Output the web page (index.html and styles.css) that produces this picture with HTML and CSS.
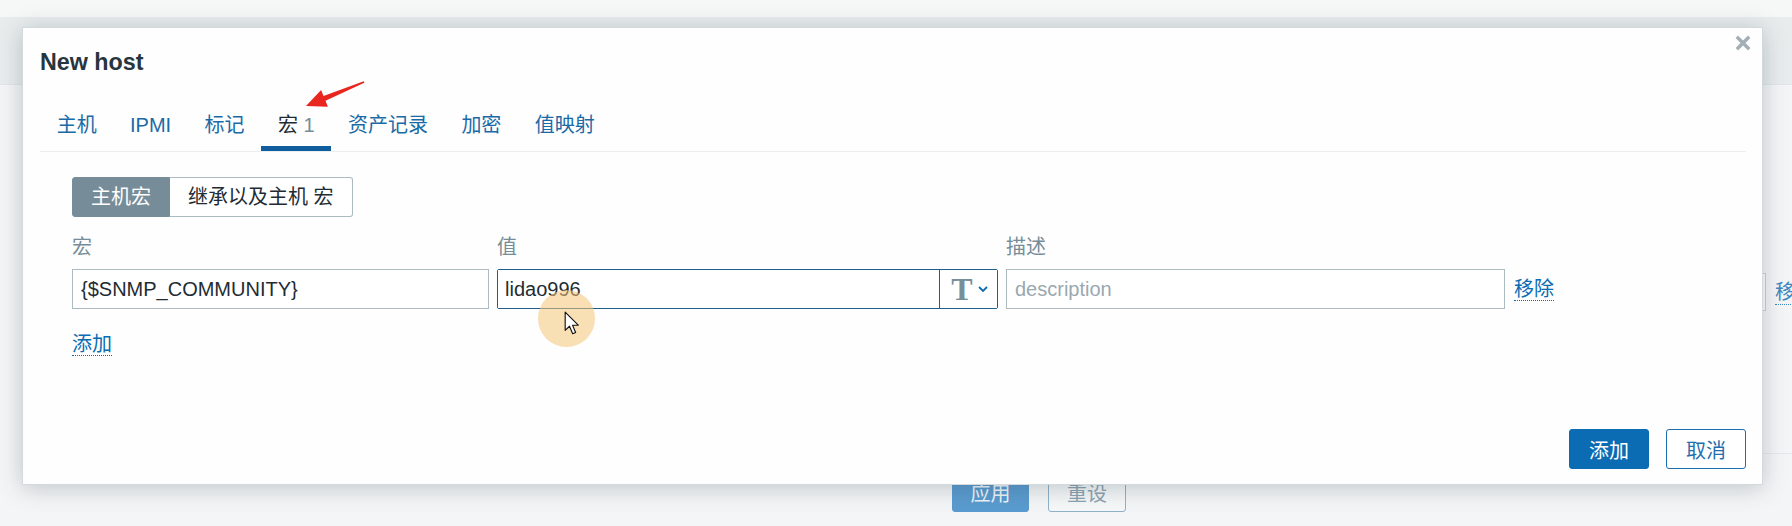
FILE: index.html
```html
<!DOCTYPE html>
<html lang="zh-CN">
<head>
<meta charset="utf-8">
<title>New host</title>
<link rel="stylesheet" href="styles.css">
</head>
<body>
<div class="page">
  <div class="page-top"></div>
  <div class="page-header"></div>
  <div class="page-main">
    <div class="bg-row">
      <span class="bg-input"></span>
      <a class="bg-link">移</a>
    </div>
    <div class="bg-sep"></div>
    <div class="bg-buttons">
      <button class="bg-btn bg-btn-primary">应用</button>
      <button class="bg-btn bg-btn-alt">重设</button>
    </div>
  </div>
</div>

<div class="dialog">
  <button class="dialog-close" title="Close">
    <svg viewBox="0 0 16 16" width="16" height="16"><path d="M3 3 L13 13 M13 3 L3 13" stroke="#a3aeb5" stroke-width="3.4" stroke-linecap="square" fill="none"/></svg>
  </button>
  <h4 class="dialog-title">New host</h4>
  <ul class="tabs">
    <li class="tab"><a>主机</a></li>
    <li class="tab"><a>IPMI</a></li>
    <li class="tab"><a>标记</a></li>
    <li class="tab active"><a>宏 <span class="tab-count">1</span></a></li>
    <li class="tab"><a>资产记录</a></li>
    <li class="tab"><a>加密</a></li>
    <li class="tab"><a>值映射</a></li>
  </ul>
  <div class="tab-content">
    <div class="radio-seg">
      <span class="seg active">主机宏</span>
      <span class="seg">继承以及主机 宏</span>
    </div>
    <div class="macro-grid">
      <div class="col-label">宏</div>
      <div class="col-label">值</div>
      <div class="col-label">描述</div>
      <div></div>
      <input class="field" type="text" value="{$SNMP_COMMUNITY}">
      <div class="value-group">
        <input class="field field-inner" type="text" value="lidao996">
        <button class="type-btn"><span class="type-t">T</span><svg viewBox="0 0 10 6" width="10" height="6"><path d="M1 1 L5 5 L9 1" stroke="#0a6cb3" stroke-width="1.8" fill="none"/></svg></button>
      </div>
      <input class="field" type="text" placeholder="description">
      <a class="link row-link">移除</a>
    </div>
    <a class="link add-link">添加</a>
  </div>
  <div class="dialog-footer">
    <button class="btn btn-primary">添加</button>
    <button class="btn btn-alt">取消</button>
  </div>
</div>

<svg class="annot-arrow" viewBox="0 0 70 35" width="70" height="35"><polygon points="63.7,4.3 23.5,19.1 21.1,13.1 6,29 27.9,29.7 25.5,23.7 64.3,5.7" fill="#e8261f"/></svg>
<div class="cursor-halo"></div>
<svg class="cursor" viewBox="0 0 14 22" width="16" height="25"><path d="M1 1 L1 17 L4.8 13.4 L7.6 20 L10.2 18.9 L7.5 12.5 L12.5 12.5 Z" fill="#fff" stroke="#111" stroke-width="1" stroke-linejoin="round"/></svg>
</body>
</html>
```

FILE: styles.css
```css
* { box-sizing: border-box; }

body {
  margin: 0;
  width: 1792px;
  height: 526px;
  overflow: hidden;
  position: relative;
  background: #f4f5f6;
  font-family: "Liberation Sans", "Noto Sans CJK SC", sans-serif;
  font-size: 20px;
  color: #1f2c33;
}

/* background page (behind overlay) */
.page-top { height: 17px; background: #f6f7f7; }
.page-header { height: 68px; background: #e9eced; border-bottom: 1px solid #e1e5e7; }
.page-main { padding-top: 188px; }
.bg-row {
  display: flex;
  align-items: center;
  gap: 9px;
  height: 38px;
  padding-left: 1756px;
  white-space: nowrap;
}
.bg-input {
  flex-shrink: 0;
  width: 10px;
  height: 38px;
  border: 1px solid #c9d1d5;
  background: #fff;
}
.bg-link {
  flex-shrink: 0;
  color: #3f86bf;
  line-height: 24px;
  border-bottom: 1px dotted #3f86bf;
}
.bg-sep {
  margin: 142px 0 0 1700px;
  border-top: 1px solid #e6e9eb;
}
.bg-buttons {
  display: flex;
  gap: 19px;
  margin-top: 18px;
  padding-left: 952px;
}
.bg-btn {
  height: 40px;
  width: 77px;
  font: inherit;
  border-radius: 3px;
  padding: 0;
}
.bg-btn-primary { background: #5a9bcf; border: 1px solid #5a9bcf; color: #eef4f9; }
.bg-btn-alt { width: 78px; background: #f5f7f8; border: 1px solid #8fb1ca; color: #8ca2b2; }

/* dialog */
.dialog {
  position: absolute;
  left: 22px;
  top: 27px;
  width: 1741px;
  height: 458px;
  background: #fdfefd;
  border: 1px solid #d3dadd;
  box-shadow: 0 3px 22px rgba(40, 60, 70, 0.26);
  padding: 0 16px 15px 17px;
  display: flex;
  flex-direction: column;
}
.dialog-close {
  position: absolute;
  top: 7px;
  right: 11px;
  width: 16px;
  height: 16px;
  padding: 0;
  border: 0;
  background: none;
  display: flex;
}
.dialog-title {
  margin: 0;
  padding-top: 20px;
  font-size: 23.3px;
  line-height: 28px;
  font-weight: bold;
  color: #27353e;
}

.tabs {
  display: flex;
  list-style: none;
  margin: 37px 0 0;
  padding: 0;
  border-bottom: 1px solid #ebeef0;
}
.tab a {
  display: block;
  padding: 0 16.7px 9px;
  line-height: 24px;
  border-bottom: 5px solid transparent;
  color: #1a6aa7;
  white-space: nowrap;
}
.tab.active a {
  color: #1f2c33;
  border-bottom-color: #0f5d9c;
}
.tab-count { color: #768d99; }

.tab-content { padding: 25px 0 0 32px; }

.radio-seg { display: flex; }
.seg {
  height: 40px;
  line-height: 38px;
  padding: 0 18px;
  border: 1px solid #acbbc2;
  background: #fff;
  color: #1f2c33;
  white-space: nowrap;
}
.seg:first-child { border-radius: 3px 0 0 3px; }
.seg:last-child { border-left: 0; border-radius: 0 3px 3px 0; }
.seg.active { background: #768d99; border-color: #768d99; color: #fff; }

.macro-grid {
  display: grid;
  grid-template-columns: 417px 501px 499px auto;
  column-gap: 8px;
  row-gap: 10px;
  margin-top: 18px;
  align-items: center;
}
.col-label { line-height: 24px; color: #768d99; }

.field {
  height: 40px;
  width: 100%;
  border: 1px solid #acbbc2;
  background: #fff;
  padding: 0 8px;
  font: inherit;
  color: #1f2c33;
  outline: none;
}
.field::placeholder { color: #9aa8af; }

.value-group {
  display: flex;
  height: 40px;
  border: 1px solid #1f5f8d;
  border-radius: 2px;
  background: #fff;
}
.field-inner {
  height: 38px;
  border: 0;
  flex: 1;
  padding: 0 7px;
}
.type-btn {
  width: 58px;
  height: 38px;
  border: 0;
  border-left: 1px solid #1f5f8d;
  background: #fff;
  padding: 0 0 0 2px;
  display: flex;
  align-items: center;
  justify-content: center;
  gap: 5px;
}
.type-t {
  font-family: "Liberation Serif", serif;
  font-weight: bold;
  font-size: 32px;
  line-height: 30px;
  color: #788e99;
}

.link {
  color: #0a6cb3;
  line-height: 22px;
  border-bottom: 1px dotted #0a6cb3;
  white-space: nowrap;
}
.row-link { justify-self: start; margin-left: 1px; }
.add-link {
  display: inline-block;
  margin-top: 24px;
}

.dialog-footer {
  margin-top: auto;
  display: flex;
  justify-content: flex-end;
  gap: 17px;
}
.btn {
  height: 40px;
  padding: 0 19px;
  font: inherit;
  border-radius: 3px;
}
.btn-primary { background: #0b6bb3; border: 1px solid #0b6bb3; color: #fff; }
.btn-alt { background: #fff; border: 1px solid #1f6eae; color: #1f6eae; }

/* annotations over the screenshot */
.annot-arrow {
  position: absolute;
  left: 300px;
  top: 77px;
}
.cursor-halo {
  position: absolute;
  left: 538px;
  top: 290px;
  width: 57px;
  height: 57px;
  border-radius: 50%;
  background: rgba(246, 196, 120, 0.55);
}
.cursor {
  position: absolute;
  left: 564px;
  top: 311px;
}
```
